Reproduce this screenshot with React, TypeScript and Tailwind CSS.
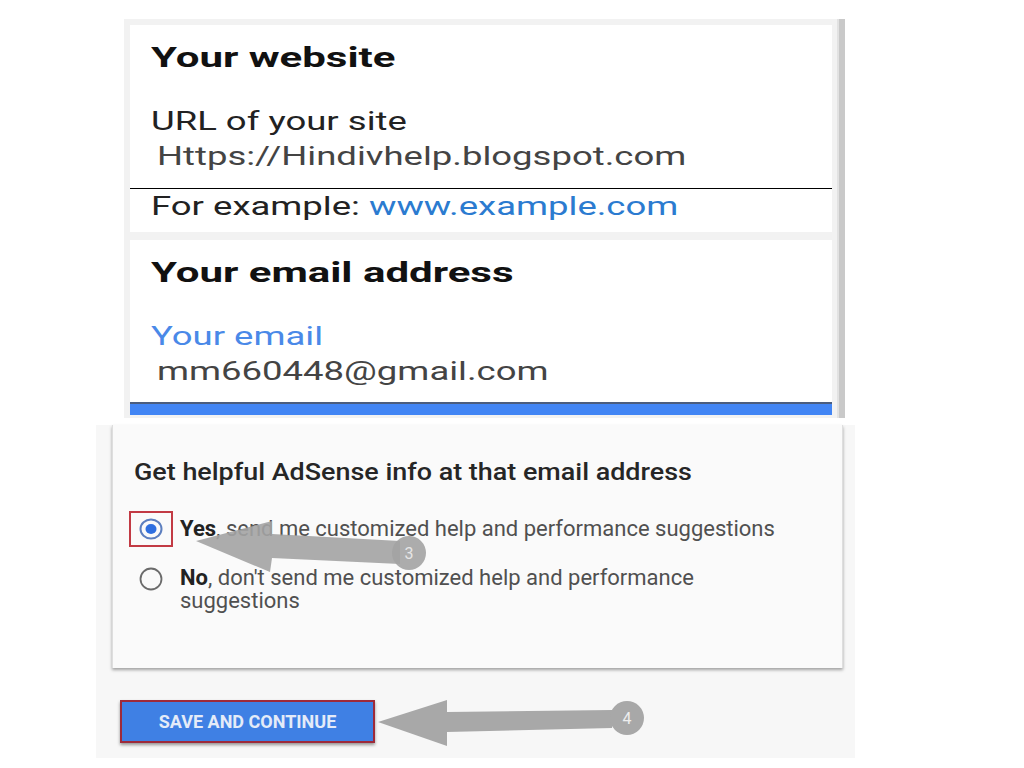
const wide = "inline-block origin-left scale-x-[1.46] whitespace-nowrap";
const wideHead = "inline-block origin-left scale-x-[1.5] whitespace-nowrap";

function RadioChecked() {
  return (
    <svg width="24" height="22" viewBox="0 0 24 22">
      <ellipse cx="12" cy="11" rx="10.5" ry="9.5" fill="none" stroke="#5d7fbf" strokeWidth="2" />
      <ellipse cx="12" cy="11" rx="5.5" ry="5" fill="#2f6fe0" />
    </svg>
  );
}

function RadioEmpty() {
  return (
    <svg width="24" height="24" viewBox="0 0 24 24">
      <ellipse cx="12" cy="12" rx="10.5" ry="10.5" fill="none" stroke="#6b6b6b" strokeWidth="1.8" />
    </svg>
  );
}

export default function App() {
  return (
    <div className="relative h-[768px] w-[1024px] overflow-hidden bg-white font-['Roboto',sans-serif]">
      {/* top: website + email cards */}
      <div className="ml-[124px] flex w-[721px] pt-[19px]">
        <div className="w-[713px] bg-[#f2f2f2] pb-[3px] pl-[6px] pr-[5px] pt-[6px]">
          <section className="bg-white pb-[10px] pt-[15px]">
            <h2 className="pl-[21px] text-[28px] font-bold leading-[36px] text-[#111]">
              <span className={wideHead}>Your website</span>
            </h2>
            <div className="mt-[31px] pl-[21px] text-[25px] leading-[30px] text-[#222]">
              <span className={wide}>URL of your site</span>
            </div>
            <div className="mt-[5px] pl-[27px] text-[25px] leading-[30px] text-[#444]">
              <span className={wide}>Https://Hindivhelp.blogspot.com</span>
            </div>
            <div className="mt-[16px] border-t border-black" />
            <div className="mt-[3px] pl-[21px] text-[25px] leading-[30px] text-[#222]">
              <span className={wide}>
                For example: <span className="text-[#2b7bd0]">www.example.com</span>
              </span>
            </div>
          </section>

          <section className="mt-[8px] bg-white pt-[15px]">
            <h2 className="pl-[21px] text-[28px] font-bold leading-[36px] text-[#111]">
              <span className={wideHead}>Your email address</span>
            </h2>
            <div className="mt-[31px] pl-[21px] text-[25px] leading-[30px] text-[#4a89e8]">
              <span className={wide}>Your email</span>
            </div>
            <div className="mt-[5px] pl-[27px] text-[25px] leading-[30px] text-[#444]">
              <span className={wide}>mm660448@gmail.com</span>
            </div>
            <div className="mt-[15px] h-[13px] border-t-2 border-[#4b5d7e] bg-[#4285f4]" />
          </section>
        </div>
        <div className="w-[8px] border-l-2 border-[#e2e2e2] bg-[#c9c9c9]" />
      </div>

      {/* bottom: adsense info + save button */}
      <div className="ml-[96px] mt-[7px] w-[759px] bg-[#f7f7f7] pb-[15px]">
        <div className="ml-[16px] h-[243px] w-[731px] border-x border-[#dedede] bg-[#fafafa] pt-[32px] shadow-[0_2px_3px_rgba(0,0,0,0.35)]">
          <h3 className="pl-[21px] text-[23px] font-medium leading-[32px] text-[#262626]">
            <span className="inline-block origin-left scale-x-[1.17] whitespace-nowrap">
              Get helpful AdSense info at that email address
            </span>
          </h3>

          <div className="mt-[22px] flex items-center pl-[16px]">
            <div className="flex h-[36px] w-[44px] items-center justify-center border-2 border-[#c23a44]">
              <RadioChecked />
            </div>
            <p className="ml-[7px] text-[22px] leading-[24px] text-[#505050]">
              <b className="font-bold text-[#222]">Yes</b>, send me customized help and performance suggestions
            </p>
          </div>

          <div className="mt-[19px] flex items-start pl-[16px]">
            <div className="flex h-[23px] w-[44px] items-center justify-center pt-[2px]">
              <RadioEmpty />
            </div>
            <p className="ml-[7px] w-[545px] text-[22px] leading-[23px] text-[#505050]">
              <b className="font-bold text-[#222]">No</b>, don't send me customized help and performance suggestions
            </p>
          </div>
        </div>

        <button className="ml-[24px] mt-[32px] flex h-[43px] w-[255px] items-center justify-center border-2 border-[#9e2a3a] bg-[#3f80e4] text-[18px] font-bold text-[#e4ebf8] shadow-[0_2px_3px_rgba(0,0,0,0.4)]">
          SAVE AND CONTINUE
        </button>
      </div>

      {/* annotation arrows */}
      <svg className="pointer-events-none absolute left-0 top-0" width="1024" height="768" viewBox="0 0 1024 768">
        <g fill="#a3a3a3" fillOpacity="0.9">
          <polygon points="196,541 272,521 272,534 400,541 400,564 272,558 270,572" />
          <circle cx="409" cy="553" r="17" />
        </g>
        <text x="409" y="559" textAnchor="middle" fontSize="16" fontFamily="Roboto, sans-serif" fill="#e6e6e6">3</text>
        <g fill="#a8a8a8">
          <polygon points="378,722 447,700 447,712 612,710 612,728 447,732 447,746" />
          <circle cx="627" cy="718" r="17" />
        </g>
        <text x="627" y="724" textAnchor="middle" fontSize="16" fontFamily="Roboto, sans-serif" fill="#eeeeee">4</text>
      </svg>
    </div>
  );
}
